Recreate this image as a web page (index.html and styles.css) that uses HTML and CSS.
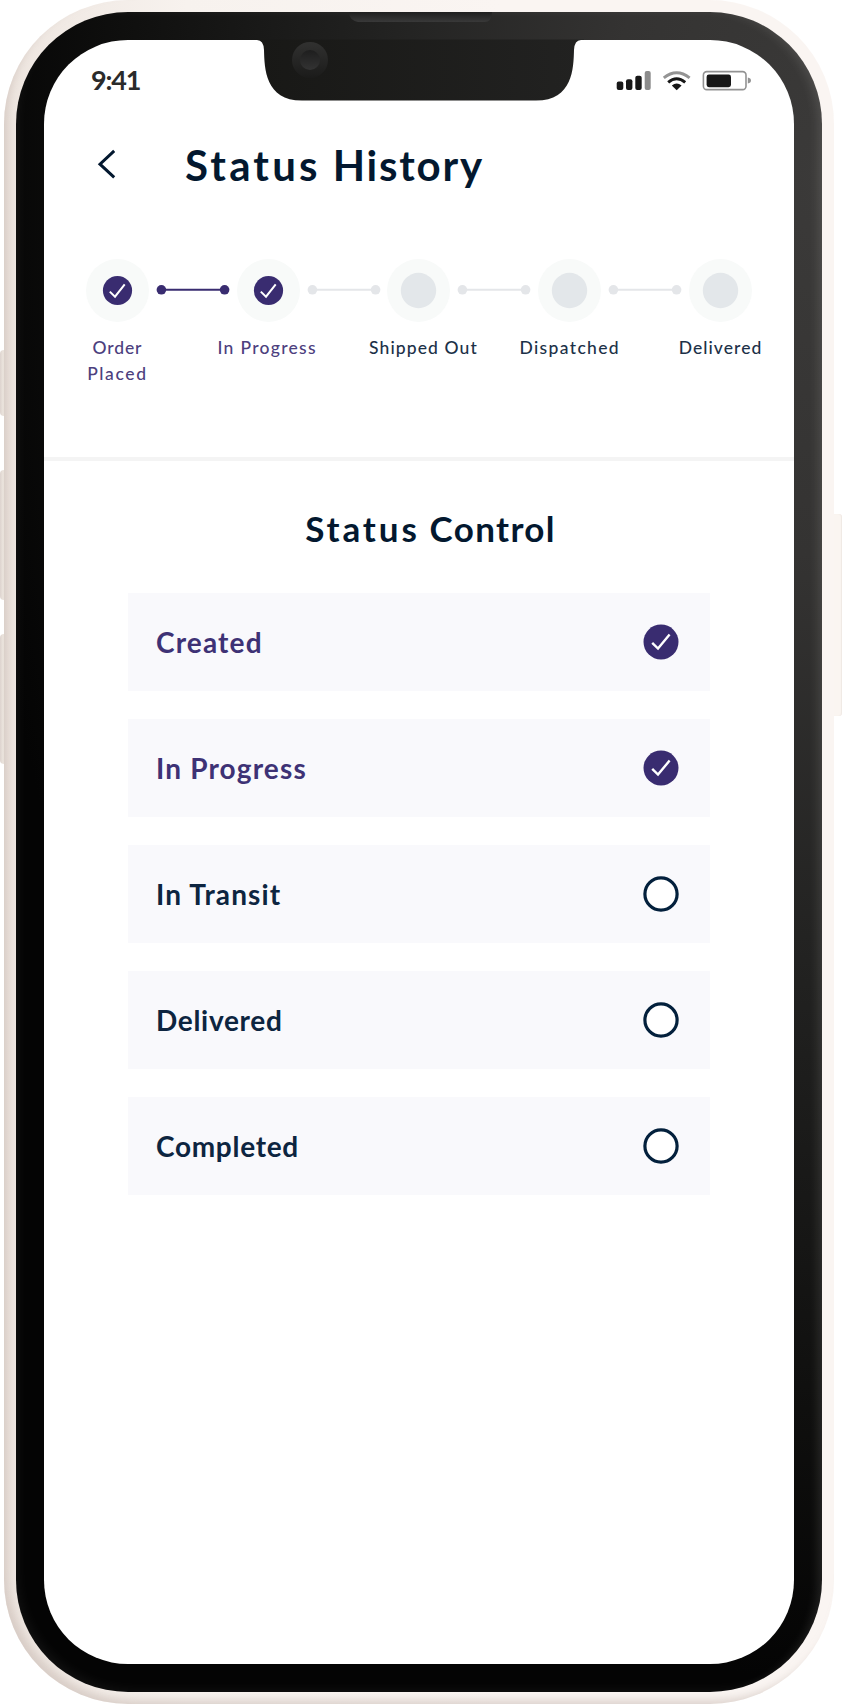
FILE: index.html
```html
<!DOCTYPE html>
<html lang="en">
<head>
<meta charset="utf-8">
<title>Status History</title>
<link rel="stylesheet" href="styles.css">
</head>
<body>
<svg width="0" height="0" class="defs" aria-hidden="true">
  <defs>
    <symbol id="check" viewBox="0 0 36 36">
      <circle cx="18" cy="18" r="17.5" fill="#392c70"/>
      <path d="M9.200 18.800 L15 24.500 L26.600 10.600" fill="none" stroke="#fff" stroke-width="2.4"/>
    </symbol>
    <symbol id="ring" viewBox="0 0 36 36">
      <circle cx="18" cy="18" r="16.1" fill="#fff" stroke="#03203c" stroke-width="3.2"/>
    </symbol>
    <symbol id="node-done" viewBox="0 0 63 63">
      <circle cx="31.5" cy="31.5" r="31.5" fill="#f8faf9"/>
      <circle cx="31.5" cy="31.5" r="14.6" fill="#392c70"/>
      <path d="M23.8 32.6 L29 37.7 L38.7 25.3" fill="none" stroke="#fff" stroke-width="2"/>
    </symbol>
    <symbol id="node-todo" viewBox="0 0 63 63">
      <circle cx="31.5" cy="31.5" r="31.5" fill="#f8faf9"/>
      <circle cx="31.5" cy="31.5" r="17.7" fill="#e3e7ea"/>
    </symbol>
    <symbol id="link" viewBox="0 0 87.8 63">
      <path d="M12.4 30.8H75.6" stroke="currentColor" stroke-width="2"/>
      <circle cx="12.4" cy="30.8" r="4.8" fill="currentColor"/>
      <circle cx="75.6" cy="30.8" r="4.8" fill="currentColor"/>
    </symbol>
  </defs>
</svg>
<div class="device">
  <i class="key key-mute"></i><i class="key key-up"></i><i class="key key-down"></i><i class="key key-power"></i>
  <div class="frame">
    <div class="bezel">
      <main class="screen">
        <div class="statusbar">
          <span class="clock">9:41</span>
          <svg class="indicators" width="136" height="22" viewBox="0 0 136 22">
            <g fill="#171717">
              <rect x="1.7" y="11.5" width="6.6" height="8.6" rx="2"/>
              <rect x="11" y="9.3" width="6.4" height="10.8" rx="2"/>
              <rect x="20.3" y="5.8" width="6.4" height="14.3" rx="2"/>
              <rect x="29.7" y="1" width="6" height="19.1" rx="2" fill="#8c8c8c"/>
            </g>
            <g fill="none" stroke-width="3">
              <path d="M48.8 7.9 Q61.6 -2.3 74.6 7.9" stroke="#949494"/>
              <path d="M53.2 12.3 Q61.6 5.2 70.2 12.3" stroke="#171717"/>
            </g>
            <path d="M56.8 15.6 Q61.7 11.4 66.6 15.6 L61.7 20.3Z" fill="#171717"/>
            <rect x="88.4" y="1.6" width="42.6" height="18" rx="3.4" fill="none" stroke="#929292" stroke-width="1.6"/>
            <rect x="91.6" y="4.6" width="24.4" height="12.6" rx="2.4" fill="#171717"/>
            <path d="M132.8 7.6 Q136 8.2 136 10.6 T132.8 13.6Z" fill="#929292"/>
          </svg>
        </div>
        <header class="header">
          <svg width="20" height="30" viewBox="0 0 20 30"><path d="M17.2 1.8 L3 15.2 L17.2 28.4" fill="none" stroke="#03182f" stroke-width="3"/></svg>
          <h1><span class="w-status">Status</span> History</h1>
        </header>
        <section class="stepper">
          <div class="track">
            <svg class="node"><use href="#node-done"/></svg>
            <svg class="link done"><use href="#link"/></svg>
            <svg class="node"><use href="#node-done"/></svg>
            <svg class="link"><use href="#link"/></svg>
            <svg class="node"><use href="#node-todo"/></svg>
            <svg class="link"><use href="#link"/></svg>
            <svg class="node"><use href="#node-todo"/></svg>
            <svg class="link"><use href="#link"/></svg>
            <svg class="node"><use href="#node-todo"/></svg>
          </div>
          <div class="labels">
            <span class="done"><b class="t-order">Order</b><br><b class="t-placed">Placed</b></span>
            <span class="done t-progress">In Progress</span>
            <span class="t-shipped">Shipped Out</span>
            <span class="t-dispatched">Dispatched</span>
            <span class="t-delivered">Delivered</span>
          </div>
        </section>
        <section class="control">
          <h2><span class="w-status">Status</span> Control</h2>
          <ul class="list">
            <li class="done">Created<svg class="mark"><use href="#check"/></svg></li>
            <li class="done">In Progress<svg class="mark"><use href="#check"/></svg></li>
            <li>In Transit<svg class="mark"><use href="#ring"/></svg></li>
            <li class="tight">Delivered<svg class="mark"><use href="#ring"/></svg></li>
            <li class="tight">Completed<svg class="mark"><use href="#ring"/></svg></li>
          </ul>
        </section>
      </main>
      <svg class="notch" width="350" height="90" viewBox="0 0 350 90">
        <defs>
          <linearGradient id="notch-fill" x1="0" y1="0" x2="1" y2="0"><stop offset="0" stop-color="#181816"/><stop offset="1" stop-color="#222221"/></linearGradient>
          <linearGradient id="speaker" x1="0" y1="0" x2="0" y2="1"><stop offset="0" stop-color="#1f1f1f"/><stop offset="1" stop-color="#393939"/></linearGradient>
          <linearGradient id="lens" x1="0" y1="0" x2="0" y2="1"><stop offset="0" stop-color="#313130"/><stop offset="1" stop-color="#1b1b1a"/></linearGradient>
          <linearGradient id="lens-core" x1="0" y1="0" x2="0" y2="1"><stop offset="0" stop-color="#1e1e1e"/><stop offset="1" stop-color="#333"/></linearGradient>
        </defs>
        <path d="M14 28 H17 Q23.500 28 24 38 C24.500 56 25 88.600 62 88.600 H296 C333 88.600 333.500 56 334 38 Q334.500 28 341 28 H344 V27.500 H14Z" fill="url(#notch-fill)"/>
        <path d="M109 0 H252 Q252 10 244 10 H118 Q109 8 109 0Z" fill="url(#speaker)"/>
        <circle cx="70" cy="48" r="18" fill="url(#lens)"/>
        <circle cx="70" cy="48" r="10" fill="url(#lens-core)"/>
      </svg>
    </div>
  </div>
</div>
</body>
</html>
```
FILE: styles.css
```css
* { box-sizing: border-box; }
body { margin: 0; background: #fff; font-family: Lato, "Noto Sans", sans-serif; color: #0d2540; overflow: hidden; }
.defs { position: absolute; }
.device { position: relative; width: 842px; height: 1704px; padding: 0 8px 0 4px; }

/* hardware */
.key { position: absolute; left: 0; width: 6px; border-radius: 4px 0 0 4px; background: linear-gradient(to right, #ddd3ce, #ebe4dd 50%, #dcd0c9); }
.key-mute { top: 350px; height: 66px; }
.key-up { top: 470px; height: 130px; }
.key-down { top: 634px; height: 130px; }
.key-power { top: 514px; left: 832px; width: 10px; height: 202px; border-radius: 0 3px 3px 0; background: #faf5f1; box-shadow: inset -1px 0 1px #efe9e4; }
.frame {
  position: relative; height: 1704px; padding: 12px; border-radius: 124px;
  background: linear-gradient(to right, #eee6e0 0, #f7f2ee 22%, #faf5f2 60%);
  box-shadow: inset 7px -7px 8px -3px rgba(196, 182, 174, .55);
}
.bezel {
  position: relative; height: 1680px; padding: 28px; border-radius: 112px;
  background: radial-gradient(ellipse 860px 1500px at 100% 10%, #3b3a39 0, #343332 25%, #222221 52%, #0f0f0e 82%, #040404 100%);
  box-shadow: inset -10px 2px 12px -7px rgba(255, 255, 245, .13), inset 8px -8px 14px -8px rgba(255, 255, 255, .07);
}
.screen { height: 1624px; border-radius: 84px; background: #fff; overflow: hidden; }
.notch { position: absolute; left: 224px; top: 0; display: block; }

/* status bar and title */
.statusbar { display: flex; justify-content: space-between; height: 78px; padding: 0 43px 0 47px; align-items: center; }
.clock { font-size: 27px; font-weight: 700; letter-spacing: -1.2px; color: #2b2b2b; }
.indicators { margin-top: 4px; }
.header { display: flex; align-items: center; gap: 68px; height: 91px; padding-left: 53px; }
.header svg { margin-top: 1px; }
h1 { margin: 2px 0 0; font-size: 42px; font-weight: 700; line-height: 60px; letter-spacing: 1.800px; color: #03182f; }
h1 .w-status { letter-spacing: 3.200px; }

/* progress steps */
.stepper { height: 252px; padding-top: 50px; border-bottom: 4px solid #f4f4f4; }
.track { display: flex; height: 63px; padding-left: 41.800px; }
.node { width: 63px; height: 63px; flex: none; }
.link { width: 87.800px; height: 63px; flex: none; color: #e4e6e9; }
.link.done { color: #392c70; }
.labels { display: grid; grid-template-columns: repeat(5, 150.800px); margin: 13.400px 0 0 -2px; font-size: 17.500px; font-weight: 500; line-height: 26px; text-align: center; color: #1c3148; }
.labels b { font-weight: inherit; }
.labels .done { color: #4c407e; }
.t-order { letter-spacing: .9px; }
.t-placed { letter-spacing: 1.600px; }
.t-progress { letter-spacing: 1.300px; padding-right: 2px; }
.t-shipped { letter-spacing: 1.100px; padding-left: 9px; }
.t-dispatched { letter-spacing: 1.350px; }
.t-delivered { letter-spacing: 1.050px; }

/* status list */
h2 { margin: 46px 0 43.500px; padding-left: 23px; text-align: center; font-size: 35px; font-weight: 700; line-height: 42px; letter-spacing: 1.350px; color: #03182f; }
h2 .w-status { letter-spacing: 2.900px; }
.list { display: flex; flex-direction: column; gap: 28.200px; margin: 0; padding: 0 84px; list-style: none; }
.list li { display: flex; align-items: center; justify-content: space-between; height: 98px; padding: 0 31px 0 28px; background: #f9f9fc; font-size: 28px; font-weight: 700; letter-spacing: 1.150px; }
.list .done { color: #3e3275; }
.list .tight { letter-spacing: .7px; }
.mark { width: 36px; height: 36px; }
```
